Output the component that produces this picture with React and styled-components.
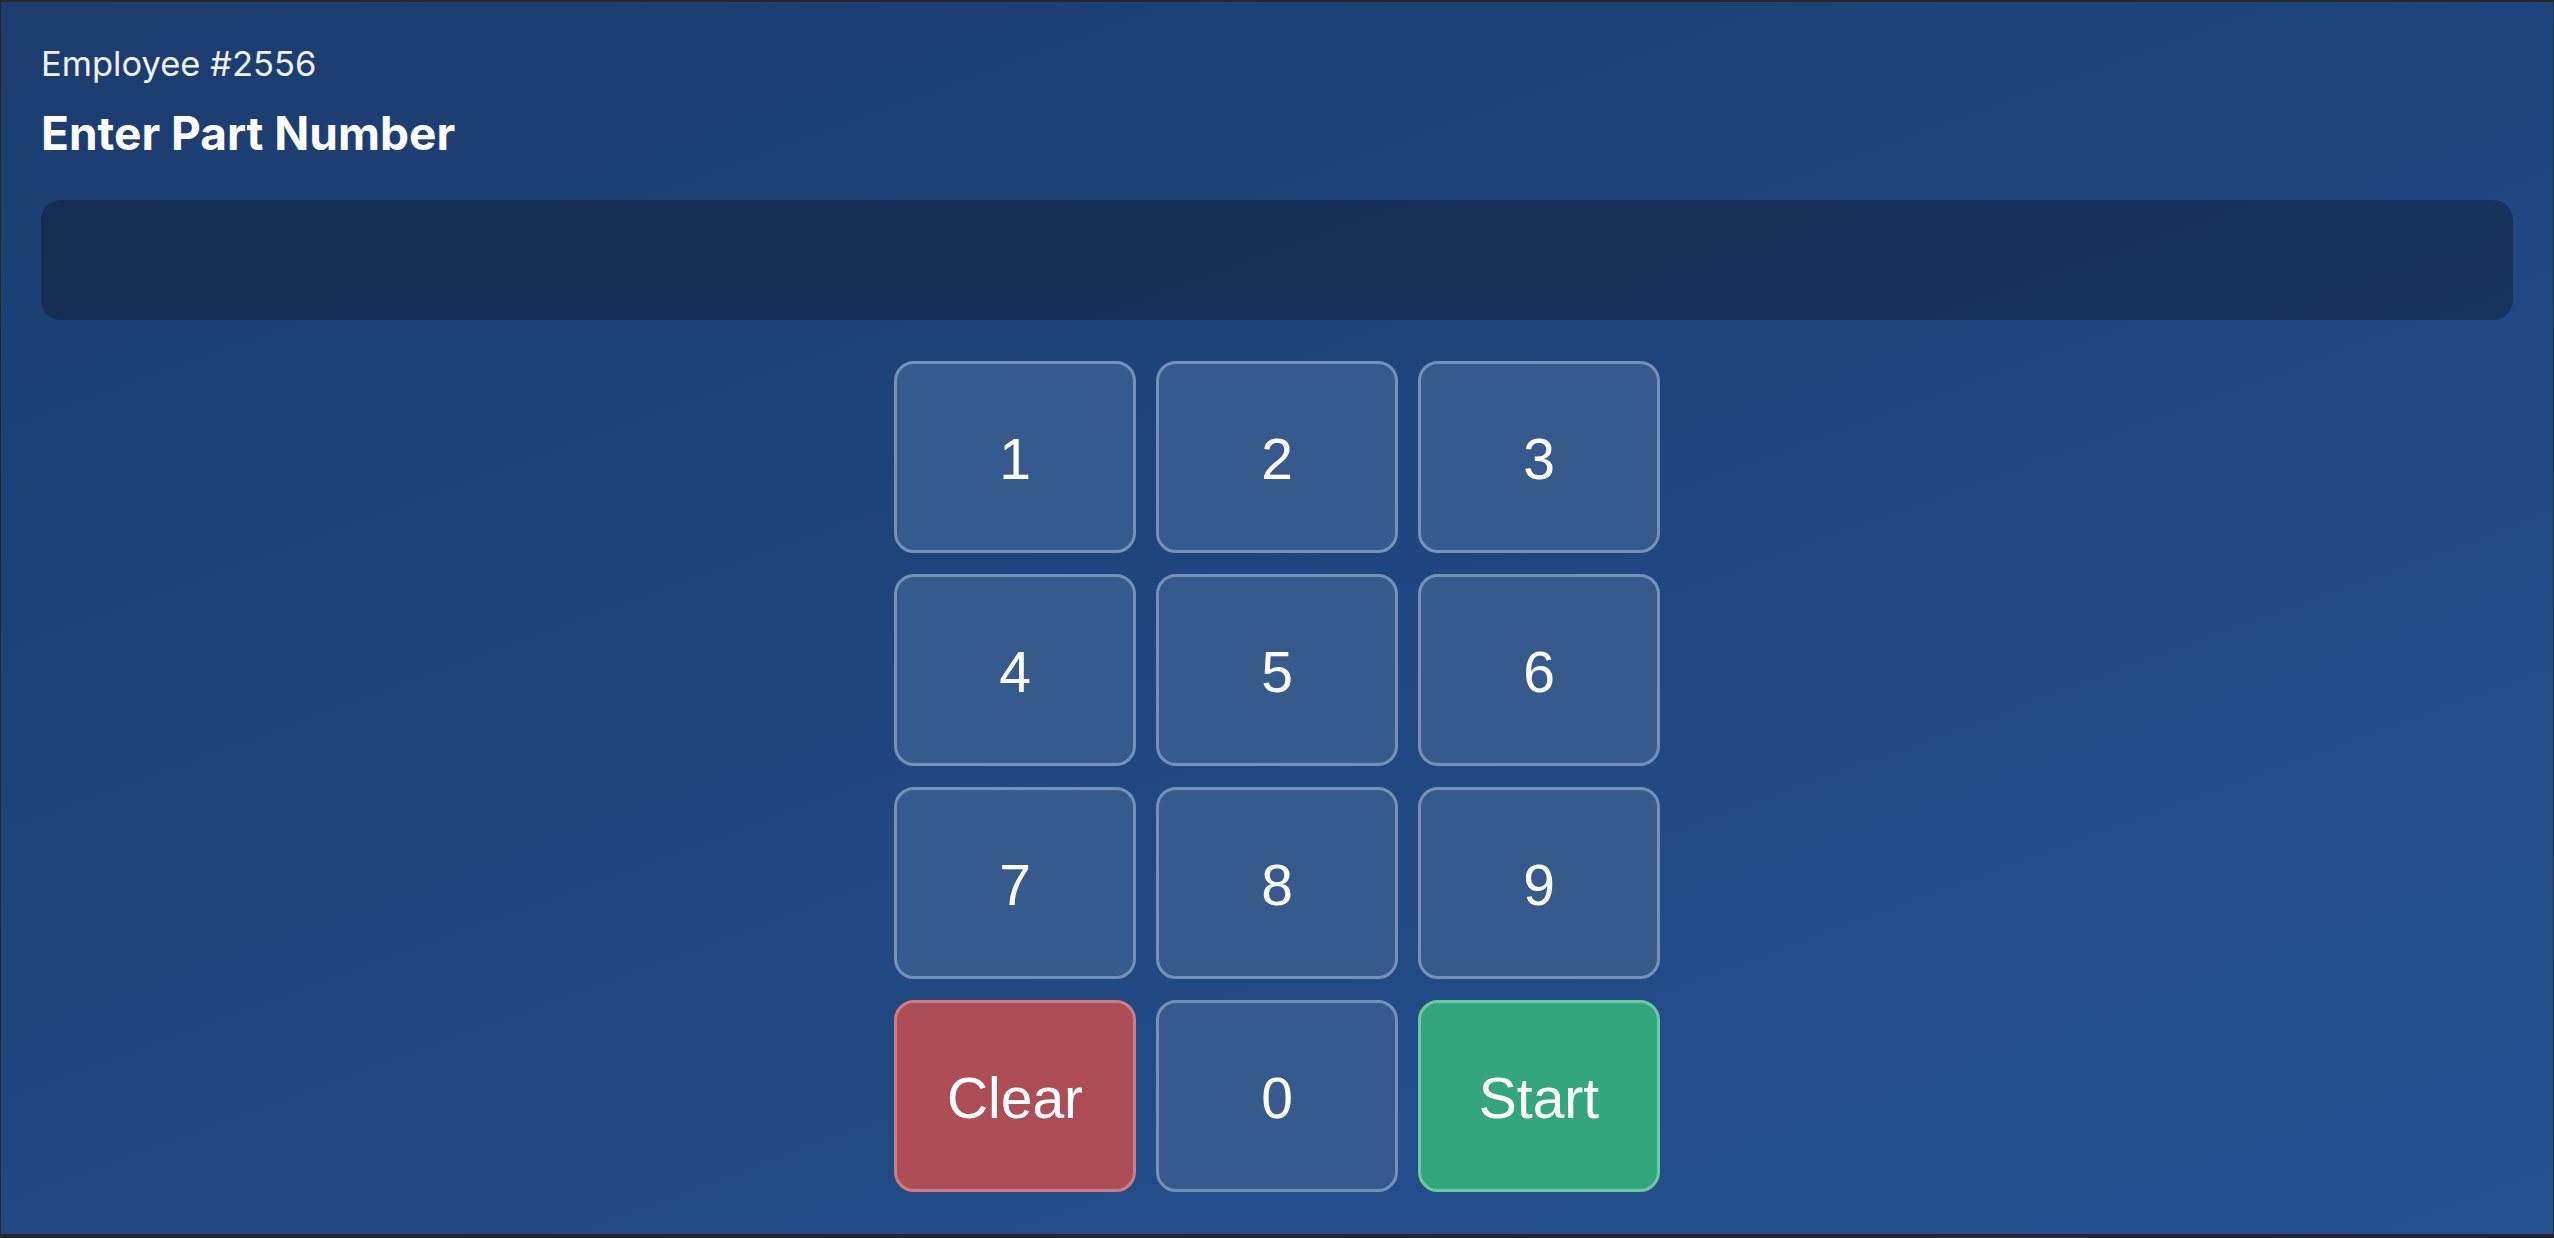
import React from 'react';
import styled, { createGlobalStyle } from 'styled-components';

// Page reset and the dark window frame round the app
const GlobalStyle = createGlobalStyle`
  html, body {
    margin: 0;
    padding: 0;
    background: #272727;
  }
  #root {
    padding: 2px 1px 4px 1px;
  }
`;

// Full-height panel with the blue gradient
const Screen = styled.div`
  height: 1232px;
  box-sizing: border-box;
  padding: 41px 40px 41px;
  display: flex;
  flex-direction: column;
  background: linear-gradient(160deg, #1c3c6d 0%, #1f4680 50%, #25538f 100%);
  font-family: Inter, "Noto Sans", sans-serif;
  color: #fff;
`;

const Employee = styled.div`
  font-size: 34.5px;
  line-height: 42px;
  color: #eef1f6;
`;

const Title = styled.h1`
  margin: 18px 0 0;
  font-size: 46px;
  line-height: 60px;
  font-weight: 700;
`;

// Read-only display for the typed part number
const Display = styled.div`
  margin-top: 37px;
  height: 120px;
  border-radius: 20px;
  background: rgba(0, 0, 0, 0.27);
`;

const Keypad = styled.div`
  margin: 41px auto 0;
  display: grid;
  grid-template-columns: repeat(3, 242px);
  grid-auto-rows: 192px;
  column-gap: 20px;
  row-gap: 21px;
`;

const keyColours = {
  digit: { bg: '#375a8c', border: '#7690b6' },
  clear: { bg: '#ad4e57', border: '#cd7d83' },
  start: { bg: '#34a67d', border: '#6ccaa0' },
};

const Key = styled.button`
  box-sizing: border-box;
  display: flex;
  align-items: center;
  justify-content: center;
  border: 3px solid ${(p) => keyColours[p.$kind].border};
  border-radius: 20px;
  background: ${(p) => keyColours[p.$kind].bg};
  color: #fff;
  font-family: "Liberation Sans", Arial, sans-serif;
  font-size: 57px;
  cursor: pointer;
  padding: 3px 0 0;
`;

const keys = [
  { label: '1', kind: 'digit' },
  { label: '2', kind: 'digit' },
  { label: '3', kind: 'digit' },
  { label: '4', kind: 'digit' },
  { label: '5', kind: 'digit' },
  { label: '6', kind: 'digit' },
  { label: '7', kind: 'digit' },
  { label: '8', kind: 'digit' },
  { label: '9', kind: 'digit' },
  { label: 'Clear', kind: 'clear' },
  { label: '0', kind: 'digit' },
  { label: 'Start', kind: 'start' },
];

const App = () => {
  return (
    <>
      <GlobalStyle />
      <Screen>
        <Employee>Employee #2556</Employee>
        <Title>Enter Part Number</Title>
        <Display />
        <Keypad>
          {keys.map((k) => (
            <Key key={k.label} $kind={k.kind}>
              {k.label}
            </Key>
          ))}
        </Keypad>
      </Screen>
    </>
  );
};

export default App;
